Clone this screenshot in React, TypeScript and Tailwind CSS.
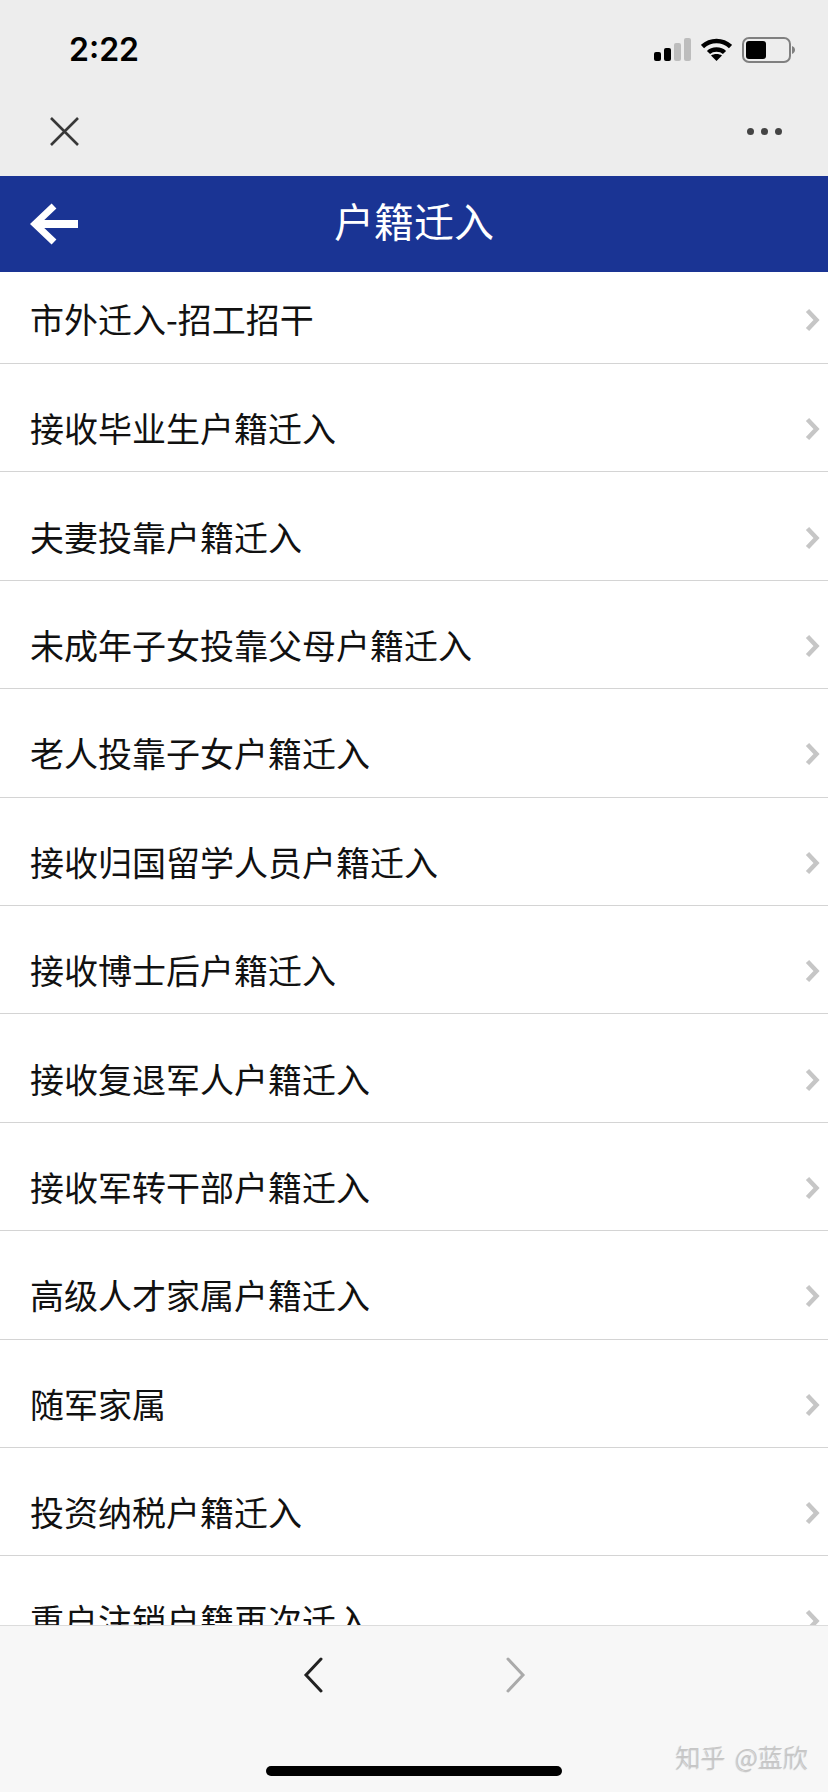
const cjk = "font-['Noto_Sans_CJK_SC','Noto_Sans',sans-serif]";

const rows = [
  "接收毕业生户籍迁入",
  "夫妻投靠户籍迁入",
  "未成年子女投靠父母户籍迁入",
  "老人投靠子女户籍迁入",
  "接收归国留学人员户籍迁入",
  "接收博士后户籍迁入",
  "接收复退军人户籍迁入",
  "接收军转干部户籍迁入",
  "高级人才家属户籍迁入",
  "随军家属",
  "投资纳税户籍迁入",
  "重户注销户籍再次迁入",
];

function Row({ label, first }: { label: string; first?: boolean }) {
  return (
    <div
      className={`flex shrink-0 items-center justify-between border-b border-[#d4d4d4] pl-[30px] pr-[8px] ${
        first ? "h-[92px] pt-[2px]" : "h-[108.4px] pt-[21px]"
      }`}
    >
      <span className="text-[34px] leading-none text-[#111]">{label}</span>
      <svg className="mt-[2px]" width="15" height="24" viewBox="0 0 15 24" fill="none" stroke="#c6c6c6" strokeWidth="4.500">
        <path d="M2.500 2.500L11.500 12l-9 9.500" />
      </svg>
    </div>
  );
}

function StatusIcons() {
  return (
    <div className="flex items-center gap-[10px]">
      <svg width="37" height="23" viewBox="0 0 37 23">
        <rect x="0" y="14" width="7" height="9" rx="2" fill="#000" />
        <rect x="10" y="10" width="7" height="13" rx="2" fill="#000" />
        <rect x="20" y="5" width="7" height="18" rx="2" fill="#bdbdbd" />
        <rect x="30" y="0" width="7" height="23" rx="2" fill="#bdbdbd" />
      </svg>
      <svg width="31" height="23" viewBox="0 0 31 23" fill="none" stroke="#000" strokeWidth="4.500">
        <path d="M1.500 8.500C9.500 1 21.500 1 29.500 8.500" />
        <path d="M7.500 14.500C11.500 10.500 19.500 10.500 23.500 14.500" />
        <path d="M15.500 23l-5.500-5.500C13 15.500 18 15.500 21 17.500z" fill="#000" stroke="none" />
      </svg>
      <svg width="53" height="26" viewBox="0 0 53 26">
        <rect x="1" y="1" width="47" height="24" rx="6" fill="none" stroke="#808080" strokeWidth="2" />
        <rect x="4" y="4" width="20" height="18" rx="3" fill="#000" />
        <path d="M50 9c2 .7 3 2.300 3 4s-1 3.300-3 4z" fill="#808080" />
      </svg>
    </div>
  );
}

export default function App() {
  return (
    <div className={`relative flex h-[1792px] w-[828px] flex-col overflow-hidden bg-white ${cjk}`}>
      <div className="h-[176px] shrink-0 bg-[#ededed]">
        <div className="flex h-[96px] items-center justify-between pl-[69px] pr-[33px] pt-[3px]">
          <span className="font-['Inter',sans-serif] text-[32px] font-semibold leading-none text-black">2:22</span>
          <StatusIcons />
        </div>
        <div className="flex h-[80px] items-center justify-between pb-[10px] pl-[49px] pr-[46px]">
          <svg width="31" height="31" viewBox="0 0 31 31" stroke="#383838" strokeWidth="2.600" fill="none">
            <path d="M2 2l27 27M29 2L2 29" />
          </svg>
          <div className="flex gap-[7px]">
            <span className="h-[7px] w-[7px] rounded-full bg-[#444]" />
            <span className="h-[7px] w-[7px] rounded-full bg-[#444]" />
            <span className="h-[7px] w-[7px] rounded-full bg-[#444]" />
          </div>
        </div>
      </div>

      <div className="grid h-[96px] shrink-0 grid-cols-[1fr_auto_1fr] items-center bg-[#1a3494] pl-[30px]">
        <svg width="48" height="42" viewBox="0 0 48 42" fill="none" stroke="#fff">
          <path d="M24 3L5 21l19 18" strokeWidth="7" />
          <path d="M6 21h42" strokeWidth="8" />
        </svg>
        <span className="-ml-[30px] pb-[8px] text-[40px] font-normal leading-none text-white">户籍迁入</span>
      </div>

      <div className="flex min-h-0 flex-1 flex-col overflow-hidden">
        <Row label="市外迁入-招工招干" first />
        {rows.map((label) => (
          <Row key={label} label={label} />
        ))}
      </div>

      <div className="relative h-[167px] shrink-0 border-t border-[#dcdcdc] bg-[#f7f7f7]">
        <div className="flex justify-center gap-[183px] pt-[30px]">
          <svg width="20" height="38" viewBox="0 0 20 38" fill="none" stroke="#222" strokeWidth="3" strokeLinecap="round">
            <path d="M18 3L3 19l15 16" />
          </svg>
          <svg width="20" height="38" viewBox="0 0 20 38" fill="none" stroke="#aaa" strokeWidth="3" strokeLinecap="round">
            <path d="M2 3l15 16L2 35" />
          </svg>
        </div>
        <div className="mx-auto mt-[72px] h-[10px] w-[296px] rounded-full bg-black" />
        <span className="absolute right-[20px] top-[118px] text-[25px] font-light leading-none text-[#c6c6c6] [text-shadow:-1px_1px_1px_rgba(0,0,0,0.22)] [word-spacing:4px]">知乎 @蓝欣</span>
      </div>
    </div>
  );
}
